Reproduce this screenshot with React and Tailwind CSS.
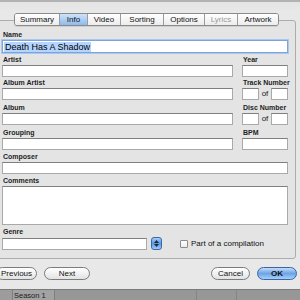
import React from "react";

const tabs = [
  { name: "Summary", w: 45 },
  { name: "Info", w: 28, active: true },
  { name: "Video", w: 33 },
  { name: "Sorting", w: 43 },
  { name: "Options", w: 41 },
  { name: "Lyrics", w: 33, disabled: true },
  { name: "Artwork", w: 41 },
];

function Label({ children }) {
  return <div className="h-[9px] whitespace-nowrap text-[7px] leading-[8px] font-bold text-[#1e1e1e] pl-[1px]">{children}</div>;
}

function Box({ className = "" }) {
  return <div className={`h-[12px] bg-white border border-[#a9a9a9] border-t-[#7f7f7f] ${className}`} />;
}

function SplitNumber({ label }) {
  return (
    <div>
      <Label>{label}</Label>
      <div className="flex items-center">
        <Box className="w-[17px]" />
        <span className="w-[12px] text-center text-[8px] leading-[12px] text-[#222]">of</span>
        <Box className="w-[17px]" />
      </div>
    </div>
  );
}

function Pill({ children, className = "", blue = false }) {
  return (
    <div
      className={`h-[13px] rounded-full flex items-center justify-center text-[8px] leading-none border ${
        blue
          ? "border-[#3a64a8] bg-gradient-to-b from-[#c6dcf7] via-[#6aa3e6] to-[#a9d0f7] text-[#111]"
          : "border-[#7c7c7c] bg-gradient-to-b from-white via-[#f1f1f1] to-[#e2e2e2] text-[#111]"
      } ${className}`}
    >
      {children}
    </div>
  );
}

export default function App() {
  return (
    <div className="w-[300px] h-[300px] overflow-hidden bg-[#e8e8e8] flex flex-col" style={{ fontFamily: '"Liberation Sans", Arial, sans-serif' }}>
      <div className="h-[2px] bg-[#b3b3b3]" />
      <div className="h-[11px] bg-gradient-to-b from-[#e4e4e4] to-[#e9e9e9]" />

      {/* tab bar */}
      <div className="relative z-10 flex pl-[14px] h-[13px] -mb-[6px]">
        <div className="flex rounded-[3px] border border-[#8a8a8a] overflow-hidden shadow-[0_1px_0_#cfcfcf]">
          {tabs.map((t, i) => (
            <div
              key={t.name}
              style={{ width: t.w - (i === 0 ? 1 : 0) }}
              className={`flex items-center justify-center text-[8px] leading-none ${i > 0 ? "border-l border-[#9c9c9c]" : ""} ${
                t.active
                  ? "bg-gradient-to-b from-[#cfe2f8] to-[#8cbbee] text-[#111]"
                  : "bg-gradient-to-b from-white to-[#ececec]"
              } ${t.disabled ? "text-[#9a9a9a]" : "text-[#111]"}`}
            >
              {t.name}
            </div>
          ))}
        </div>
      </div>

      {/* panel */}
      <div className="ml-[-8px] w-[304px] h-[239px] shrink-0 border border-[#acacac] rounded-[3px] bg-[#e4e4e4] pl-[9px] pt-[10px]">
        <Label>Name</Label>
        <div className="w-[286px] h-[13px] bg-white border border-[#7ba3dc] shadow-[0_0_0_1px_#a9c8ef] flex items-center pl-[1px]">
          <span className="bg-[#b5d5ff] text-[9px] leading-[10px] px-[1px] text-black">Death Has A Shadow</span>
        </div>

        <div className="grid grid-cols-[231px_46px] gap-x-[9px]">
          <div className="mt-[3px]"><Label>Artist</Label><Box /></div>
          <div className="mt-[3px]"><Label>Year</Label><Box /></div>

          <div className="mt-[2px]"><Label>Album Artist</Label><Box /></div>
          <div className="mt-[2px]"><SplitNumber label="Track Number" /></div>

          <div className="mt-[4px]"><Label>Album</Label><Box /></div>
          <div className="mt-[4px]"><SplitNumber label="Disc Number" /></div>

          <div className="mt-[4px]"><Label>Grouping</Label><Box /></div>
          <div className="mt-[4px]"><Label>BPM</Label><Box /></div>
        </div>

        <div className="mt-[3px] w-[286px]"><Label>Composer</Label><Box /></div>
        <div className="mt-[3px] w-[286px]">
          <Label>Comments</Label>
          <div className="h-[39px] bg-white border border-[#a9a9a9] border-t-[#7f7f7f]" />
        </div>

        <div className="mt-[3px]">
          <Label>Genre</Label>
          <div className="flex items-center">
            <Box className="w-[145px]" />
            <div className="ml-[4px] w-[11px] h-[13px] rounded-[3px] border border-[#3b68ad] bg-gradient-to-b from-[#a8cdf5] via-[#5b97e0] to-[#9fcaf5] flex flex-col items-center justify-center gap-[1px]">
              <svg width="5" height="3" viewBox="0 0 5 3"><path d="M0 3 L2.5 0 L5 3 Z" fill="#1b2a44" /></svg>
              <svg width="5" height="3" viewBox="0 0 5 3"><path d="M0 0 L2.5 3 L5 0 Z" fill="#1b2a44" /></svg>
            </div>
            <div className="ml-[18px] w-[8px] h-[8px] bg-gradient-to-b from-white to-[#ececec] border border-[#8c8c8c] rounded-[1px]" />
            <span className="ml-[3px] text-[8px] leading-none text-[#111]">Part of a compilation</span>
          </div>
        </div>
      </div>

      {/* buttons */}
      <div className="flex items-center mt-[8px] h-[13px]">
        <Pill className="ml-[-4px] w-[41px]">Previous</Pill>
        <Pill className="ml-[7px] w-[46px]">Next</Pill>
        <Pill className="ml-[121px] w-[39px]">Cancel</Pill>
        <Pill blue className="ml-[7px] w-[40px] font-bold">OK</Pill>
      </div>

      {/* list below */}
      <div className="mt-[9px] flex-1 border-t border-[#7a7a7a] bg-[#979797] flex">
        <div className="w-[13px] border-r border-[#7f7f7f] bg-[#9c9c9c]" />
        <div className="w-[42px] border-r border-[#7f7f7f] bg-[#a2a2a2] pl-[1px] pt-[2px] text-[7.5px] leading-[8px] text-[#1c1c1c]">Season 1</div>
        <div className="w-[142px] border-r border-[#858585]" />
        <div className="w-[40px] border-r border-[#858585]" />
        <div className="flex-1" />
      </div>
    </div>
  );
}
